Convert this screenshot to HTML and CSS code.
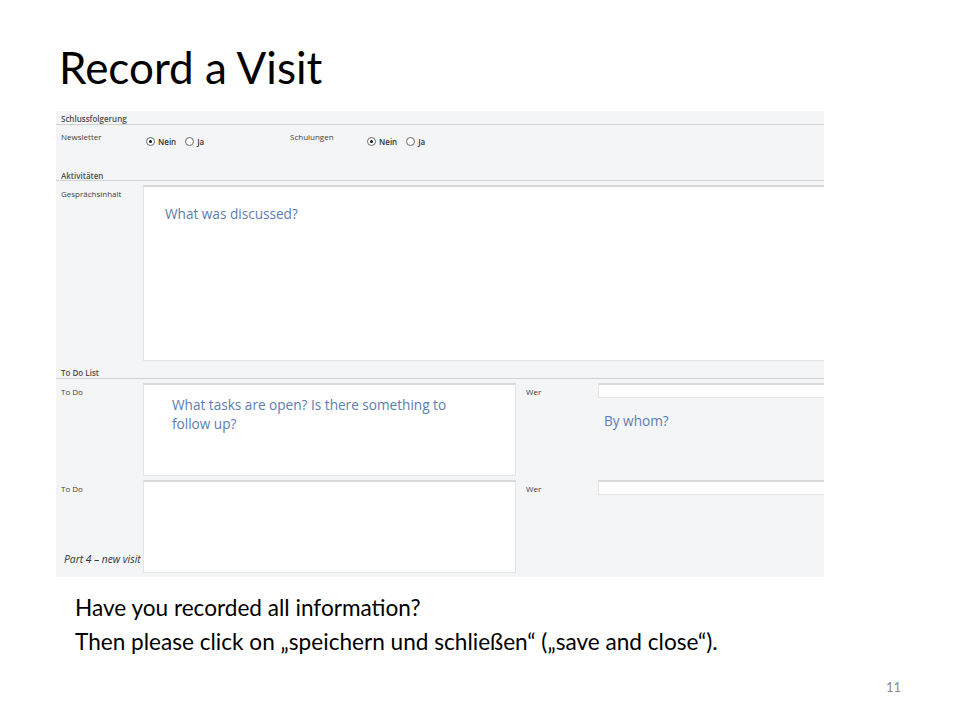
FILE: index.html
```html
<!DOCTYPE html>
<html lang="en">
<head>
    <meta charset="UTF-8">
    <meta name="viewport" content="width=device-width, initial-scale=1.0">
    <title>Record a Visit</title>
    <link rel="stylesheet" href="styles.css">
</head>
<body>
    <div class="slide">
        <h1 class="title">Record a Visit</h1>

        <div class="shot">
            <div class="section">Schlussfolgerung</div>
            <div class="row row-options">
                <div class="label">Newsletter</div>
                <div class="radios">
                    <span class="radio checked"></span><span class="opt">Nein</span>
                    <span class="radio"></span><span class="opt">Ja</span>
                </div>
                <div class="label label-mid">Schulungen</div>
                <div class="radios">
                    <span class="radio checked"></span><span class="opt">Nein</span>
                    <span class="radio"></span><span class="opt">Ja</span>
                </div>
            </div>

            <div class="section section-gap">Aktivitäten</div>
            <div class="row row-talk">
                <div class="label">Gesprächsinhalt</div>
                <div class="box box-talk">
                    <p class="hint hint-talk">What was discussed?</p>
                </div>
            </div>

            <div class="section">To Do List</div>
            <div class="row row-todo">
                <div class="label">To Do</div>
                <div class="box box-todo">
                    <p class="hint hint-todo">What tasks are open? Is there something to follow up?</p>
                </div>
                <div class="label label-wer">Wer</div>
                <div class="who">
                    <div class="input"></div>
                    <p class="hint hint-who">By whom?</p>
                </div>
            </div>
            <div class="row row-todo row-last">
                <div class="label">To Do</div>
                <div class="box box-todo"></div>
                <div class="label label-wer">Wer</div>
                <div class="who">
                    <div class="input"></div>
                </div>
            </div>

            <span class="caption">Part 4 – new visit</span>
        </div>

        <div class="notes">
            <p>Have you recorded all information?</p>
            <p>Then please click on „speichern und schließen“ („save and close“).</p>
        </div>

        <div class="page-num">11</div>
    </div>
</body>
</html>
```

FILE: styles.css
```css
body {
    margin: 0;
    background: #fff;
    font-family: Lato, "Open Sans", sans-serif;
}
.slide {
    width: 960px;
    height: 720px;
    position: relative;
    overflow: hidden;
}
.title {
    margin: 0;
    padding: 38px 0 0 59px;
    font-size: 44px;
    font-weight: 400;
    line-height: 58px;
    color: #000;
}

/* embedded form screenshot */
.shot {
    position: relative;
    margin: 15px 0 0 56px;
    width: 768px;
    height: 466px;
    background: #f4f5f7;
    font-family: "Open Sans", sans-serif;
    font-size: 8px;
    color: #3f3f3f;
    overflow: hidden;
}
.section {
    height: 13px;
    line-height: 16px;
    padding-left: 5px;
    font-weight: 600;
    color: #4d4d4d;
    border-bottom: 1px solid #cfd1d4;
}
.section-gap {
    height: 10px;
    line-height: 12px;
}
.row {
    display: flex;
    align-items: flex-start;
}
.label {
    width: 82px;
    padding: 3px 0 0 5px;
    flex-shrink: 0;
}
.row-options {
    height: 45px;
}
.row-options .label {
    padding-top: 6px;
}
.label-mid {
    width: 74px;
    padding-left: 0;
}
.radios {
    display: flex;
    align-items: center;
    padding-top: 11px;
    width: 147px;
}
.radio {
    width: 7px;
    height: 7px;
    border: 1px solid #666;
    border-radius: 50%;
    background: #fff;
    position: relative;
    margin-left: 3px;
}
.radio.checked::after {
    content: "";
    position: absolute;
    left: 2px;
    top: 2px;
    width: 3px;
    height: 3px;
    border-radius: 50%;
    background: #111;
}
.opt {
    margin: 0 6px 0 3px;
    font-weight: 600;
    color: #333;
}
.box {
    background: #fff;
    border-top: 2px solid #d8d9db;
    border-left: 1px solid #e3e4e6;
    border-bottom: 1px solid #e3e4e6;
}
.row-talk {
    margin-top: 4px;
    height: 180px;
}
.box-talk {
    flex: 1;
    height: 173px;
}
.row-todo {
    margin-top: 4px;
    height: 93px;
}
.row-last {
    margin-top: 4px;
}
.box-todo {
    width: 371px;
    height: 90px;
    border-right: 1px solid #e3e4e6;
}
.label-wer {
    width: 72px;
    padding-left: 10px;
}
.who {
    flex: 1;
}
.input {
    height: 12px;
    background: #fff;
    border-top: 2px solid #d8d9db;
    border-left: 1px solid #e3e4e6;
    border-bottom: 1px solid #e3e4e6;
}
.hint {
    margin: 0;
    font-size: 13.6px;
    line-height: 19px;
    color: #5b7db3;
}
.hint-talk {
    padding: 17px 0 0 21px;
}
.hint-todo {
    padding: 10px 0 0 28px;
    width: 300px;
}
.hint-who {
    padding: 13px 0 0 6px;
}
.caption {
    position: absolute;
    left: 8px;
    top: 441px;
    font-size: 10.3px;
    font-style: italic;
    color: #333;
    background: #f4f5f7;
}

.notes {
    padding: 14px 0 0 75px;
    font-size: 22.6px;
    line-height: 34px;
    color: #000;
}
.notes p {
    margin: 0;
}
.page-num {
    position: absolute;
    left: 886px;
    top: 679px;
    font-size: 13px;
    color: #8a8a8a;
}
```
